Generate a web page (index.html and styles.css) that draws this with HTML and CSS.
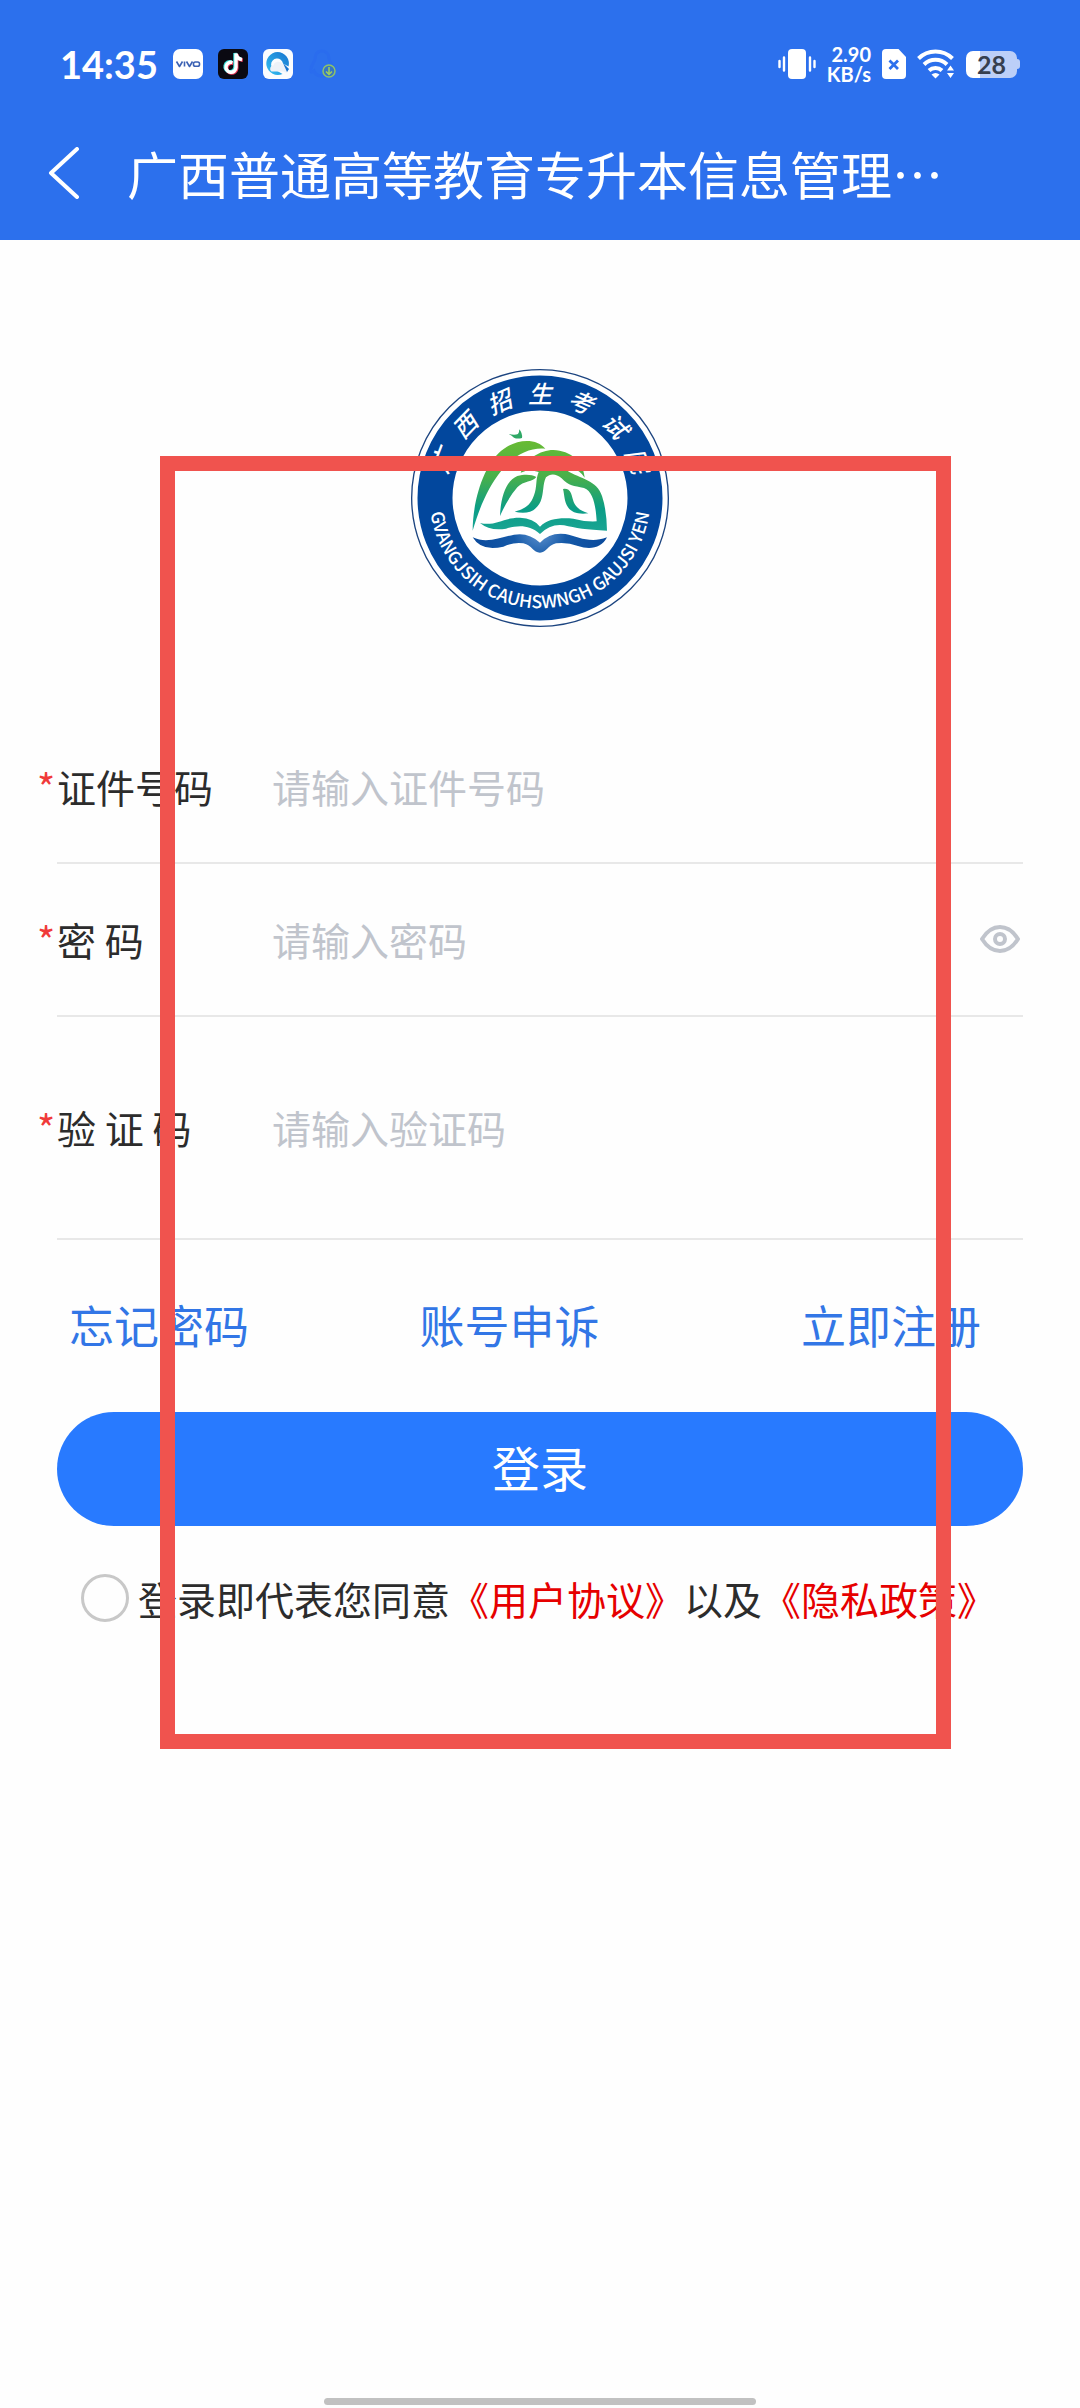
FILE: index.html
```
<!DOCTYPE html>
<html lang="zh-CN">
<head>
	<meta charset="UTF-8">
	<meta name="viewport" content="width=device-width">
	<title>广西普通高等教育专升本信息管理系统</title>
	<link rel="stylesheet" href="styles.css">
</head>
<body>
	<div class="app">
		<header class="top">
			<div class="status">
				<div class="status-left">
					<span class="clock">14:35</span>
					<svg width="30" height="30" viewBox="0 0 30 30">
						<rect width="30" height="30" rx="7" fill="#fff"/>
						<g fill="none" stroke="#3c62b4" stroke-width="1.6" stroke-linejoin="round">
							<path d="M3.500 12.500l3 5 3-5M11.500 12.500v5M13.500 12.500l3 5 3-5"/>
							<rect x="20.500" y="13" width="6" height="4.300" rx="1.800"/>
						</g>
					</svg>
					<svg width="30" height="30" viewBox="0 0 30 30">
						<rect width="30" height="30" rx="6" fill="#0a0912"/>
						<g fill="none" stroke-width="3.400">
							<path d="M14.500 13.500a5 5 0 1 0 3.500 5V4.500c.5 3.500 2.500 5.500 6 6" stroke="#ee3a5b" transform="translate(.8 .8)"/>
							<path d="M14.500 13.500a5 5 0 1 0 3.500 5V4.500c.5 3.500 2.500 5.500 6 6" stroke="#3ee0dc" transform="translate(-1 -.6)"/>
							<path d="M14.500 13.500a5 5 0 1 0 3.500 5V4.500c.5 3.500 2.500 5.500 6 6" stroke="#fff"/>
						</g>
					</svg>
					<svg width="30" height="30" viewBox="0 0 30 30">
						<defs>
							<linearGradient id="ring" x1="0" y1="1" x2="1" y2="0">
								<stop offset="0" stop-color="#35c1f2"/>
								<stop offset="1" stop-color="#1673cf"/>
							</linearGradient>
						</defs>
						<rect width="30" height="30" rx="6" fill="#fbfcfe"/>
						<path d="M14.500 3a11.500 11.500 0 1 0 5 22l-6-3.500a6 6 0 1 1 6.500-7l5.500 3A11.500 11.500 0 0 0 14.500 3z" fill="url(#ring)"/>
						<path d="M8.500 22.500a3.500 3.500 0 0 1 2-6.300 5 5 0 0 1 9-1.200l6 5.500-1.500 3.500-4-1.500z" fill="#eef2f8"/>
						<path d="M20 14l6 6-2 3z" fill="#1673cf"/>
					</svg>
					<svg class="qq" width="28" height="30" viewBox="0 0 28 30">
						<path d="M14 2c-5 0-7 4-7 8 0 3-5 7-4 12 0 2 2 1 3 0 1 3 3 5 8 5s7-2 8-5c1 1 3 2 3 0 1-5-4-9-4-12 0-4-2-8-7-8z" fill="none" stroke="#2a6cee" stroke-width="3"/>
						<circle cx="21" cy="22" r="6" fill="#3574c6" stroke="#8dc26a" stroke-width="1.500"/>
						<path d="M21 18v7M18 22.500l3 3 3-3" fill="none" stroke="#9fd05c" stroke-width="1.500"/>
					</svg>
				</div>
				<div class="status-right">
					<svg width="38" height="32" viewBox="0 0 38 32">
						<rect x="10" y="1" width="18" height="30" rx="4" fill="#fff"/>
						<path d="M1.500 13v6M6 9.500v13M32 9.500v13M36.500 13v6" stroke="#fff" stroke-width="2.400" stroke-linecap="round"/>
					</svg>
					<span class="speed"><span>2.90</span><span>KB/s</span></span>
					<svg width="24" height="30" viewBox="0 0 24 30">
						<path d="M4 0h12.500L24 8v18a4 4 0 0 1-4 4H4a4 4 0 0 1-4-4V4a4 4 0 0 1 4-4z" fill="#fff"/>
						<path d="M7.500 11.500l8.500 8.500M16 11.500l-8.500 8.500" stroke="#2c70ed" stroke-width="2.800"/>
					</svg>
					<svg class="wifi" width="38" height="30" viewBox="0 0 38 30">
						<g fill="none" stroke="#fff" stroke-width="4">
							<path d="M1.500 9.500a24 24 0 0 1 34 0"/>
							<path d="M7 15.500a16.500 16.500 0 0 1 23 0"/>
							<path d="M12 21.500a9.500 9.500 0 0 1 13 0"/>
						</g>
						<path d="M14.500 25.500q4-3 8 0l-4 4z" fill="#fff"/>
						<path d="M30 21.500l3.500-5 3.500 5zM30 24l3.500 5 3.500-5z" fill="#fff"/>
					</svg>
					<span class="battery"><span class="level">28</span></span>
				</div>
			</div>
			<div class="nav">
				<button class="back" type="button" aria-label="返回">
					<svg width="32" height="52" viewBox="0 0 32 52"><path d="M29 2L3 26l26 24" fill="none" stroke="#fff" stroke-width="4" stroke-linecap="round" stroke-linejoin="round"/></svg>
				</button>
				<h1 class="title">广西普通高等教育专升本信息管理…</h1>
			</div>
		</header>

		<main class="main">
			<svg class="logo" width="260" height="260" viewBox="30 24 780 780">
				<defs>
					<linearGradient id="leaf" gradientUnits="userSpaceOnUse" x1="0" y1="60" x2="0" y2="335">
						<stop offset="0" stop-color="#69bb33"/>
						<stop offset=".4" stop-color="#49b04a"/>
						<stop offset=".75" stop-color="#0a9d86"/>
						<stop offset="1" stop-color="#1aa594"/>
					</linearGradient>
					<radialGradient id="wave" gradientUnits="userSpaceOnUse" cx="240" cy="335" r="200">
						<stop offset="0" stop-color="#5f93cf"/>
						<stop offset=".4" stop-color="#1559a8"/>
						<stop offset="1" stop-color="#0a4a9c"/>
					</radialGradient>
					<path id="arc" d="M89 414a331 331 0 0 0 662 0"/>
				</defs>
				<circle cx="420" cy="414" r="385" fill="#fff" stroke="#1d4580" stroke-width="4"/>
				<circle cx="420" cy="414" r="315" fill="#fff" stroke="#02479d" stroke-width="105"/>
				<g class="logo-cn">
					<text x="420" y="128" transform="rotate(-69 420 414)">广</text>
					<text x="420" y="128" transform="rotate(-46 420 414)">西</text>
					<text x="420" y="128" transform="rotate(-23 420 414)">招</text>
					<text x="420" y="128">生</text>
					<text x="420" y="128" transform="rotate(23 420 414)">考</text>
					<text x="420" y="128" transform="rotate(46 420 414)">试</text>
					<text x="420" y="128" transform="rotate(69 420 414)">院</text>
				</g>
				<text class="logo-en"><textPath href="#arc" startOffset="50%">GVANGJSIH CAUHSWNGH GAUJSI YEN</textPath></text>
				<g transform="translate(180 180)" fill="url(#leaf)">
					<path d="M146 42q18 5 28 0q4-4 4-14q10 12 8 26q-14 4-24-1q-8-7-16-11z" fill="#2fa866"/>
					<path d="M38 332C38 240 74 124 132 86C176 54 232 56 256 86C210 82 166 102 124 152C86 200 62 252 38 332z"/>
					<path d="M182 158C196 118 240 90 280 90C332 92 370 124 374 173C358 150 346 146 322 152C360 176 412 180 426 228Q440 270 441 332C380 330 346 324 312 316Q272 310 240 342C206 312 172 316 138 326Q90 334 60 309C106 320 130 292 180 293Q220 294 240 320C262 296 302 292 340 296Q376 306 410 304C408 268 402 214 372 204C340 196 328 200 304 174C288 160 270 160 258 172C248 190 252 220 242 244C228 276 198 284 164 275C198 266 212 254 222 226C232 200 226 180 236 156Q208 146 182 158z"/>
					<path d="M120 288C122 232 138 182 172 168C196 162 216 164 229 171C220 186 190 182 172 202C150 228 134 256 120 288z"/>
					<path d="M309 207Q326 204 333 220C342 242 336 264 385 280C352 284 334 276 324 262C312 244 314 226 309 207z"/>
				</g>
				<path transform="translate(180 180)" d="M38 352C80 372 122 352 162 344Q206 336 240 368Q270 336 316 342C356 350 390 372 441 352C426 384 390 390 354 378Q322 366 288 370C264 376 258 398 240 398C220 398 216 376 190 370Q160 366 130 380Q64 396 38 352z" fill="url(#wave)"/>
			</svg>

			<form class="form">
				<div class="row">
					<label class="label" for="idno">证件号码</label>
					<input class="text" id="idno" type="text" placeholder="请输入证件号码">
				</div>
				<div class="row">
					<label class="label" for="pwd">密 码</label>
					<input class="text" id="pwd" type="password" placeholder="请输入密码">
					<button class="eye" type="button" aria-label="显示密码">
						<svg width="42" height="30" viewBox="0 0 42 30">
							<path d="M3 15C8 7 14 3 21 3s13 4 18 12c-5 8-11 12-18 12S8 23 3 15z" fill="none" stroke="#c0c4cc" stroke-width="4" stroke-linejoin="round"/>
							<circle cx="21" cy="15" r="5" fill="none" stroke="#c0c4cc" stroke-width="4"/>
						</svg>
					</button>
				</div>
				<div class="row row-code">
					<label class="label" for="code">验 证 码</label>
					<input class="text" id="code" type="text" placeholder="请输入验证码">
				</div>

				<div class="links">
					<a href="#">忘记密码</a>
					<a href="#">账号申诉</a>
					<a href="#">立即注册</a>
				</div>

				<button class="login" type="button">登录</button>

				<div class="agree">
					<input id="agree" type="radio">
					<label for="agree">登录即代表您同意<a href="#">《用户协议》</a>以及<a href="#">《隐私政策》</a></label>
				</div>
			</form>
		</main>

		<div class="home"></div>
		<div class="mark"></div>
	</div>
</body>
</html>
```
FILE: styles.css
```
* {
	box-sizing: border-box;
}
body {
	margin: 0;
	background-color: #fefefe;
	color: #2c2c2c;
	font-family: "Noto Sans CJK SC", sans-serif;
	font-size: 39px;
}
button {
	border: 0;
	padding: 0;
	background: none;
	font-family: inherit;
}
a {
	text-decoration: none;
}
svg {
	display: block;
}
.app {
	position: relative;
	display: flex;
	flex-direction: column;
	min-height: 100vh;
}

/* 顶部 */
.top {
	background-color: #2c70ed;
	color: #fff;
	padding-bottom: 10px;
}
.status {
	display: flex;
	justify-content: space-between;
	height: 106px;
	padding: 22px 60px 0 60px;
	font-family: Lato, sans-serif;
	font-weight: bold;
}
.status-left, .status-right {
	display: flex;
	align-items: center;
}
.status-left {
	gap: 15px;
}
.status-right {
	gap: 11px;
}
.clock {
	font-size: 38px;
}
.speed {
	display: flex;
	flex-direction: column;
	align-items: flex-end;
	font-size: 20px;
	line-height: 20px;
}
.battery {
	display: flex;
	align-items: center;
}
.battery::after {
	content: "";
	width: 3px;
	height: 10px;
	border-radius: 0 3px 3px 0;
	background-color: #bccff8;
}
.level {
	width: 51px;
	border-radius: 7px;
	background: linear-gradient(90deg, #fff 28%, #bccff8 28%);
	color: #363f50;
	font-size: 25px;
	line-height: 27px;
	text-align: center;
}
.nav {
	display: flex;
	align-items: center;
	gap: 47px;
	height: 124px;
	padding: 10px 48px 0;
}
.title {
	margin: 0;
	font-size: 51px;
	font-weight: normal;
	line-height: 76px;
}

/* 登录 */
.main {
	padding: 128px 57px 0;
}
.logo {
	margin: 0 auto;
}
.logo-cn {
	fill: #fff;
	font-size: 72px;
	font-weight: 500;
	font-style: italic;
	text-anchor: middle;
}
.logo-en {
	fill: #fff;
	font-size: 53px;
	font-weight: 500;
	text-anchor: middle;
}
.form {
	margin-top: 83px;
}
.row {
	display: flex;
	align-items: center;
	height: 153px;
	padding-bottom: 2px;
	border-bottom: 2px solid #e8e8e8;
}
.row-code {
	height: 223px;
}
.label {
	width: 215px;
}
.label::before {
	content: "*";
	display: inline-block;
	width: 20px;
	margin-left: -20px;
	color: #f03a3a;
}
.text {
	flex: 1;
	min-width: 0;
	border: 0;
	padding: 0;
	outline: none;
	background: none;
	color: inherit;
	font: inherit;
}
.text::placeholder {
	color: #c0c4cc;
}
.eye {
	padding-right: 2px;
}
.links {
	display: grid;
	grid-template-columns: 351fr 382fr auto;
	padding: 52px 42px 0 12px;
	font-size: 45px;
	line-height: 66px;
}
.links a {
	color: #3276e6;
}
.login {
	display: block;
	width: 100%;
	height: 114px;
	margin-top: 54px;
	padding-bottom: 6px;
	border-radius: 57px;
	background-color: #287aff;
	color: #fff;
	font-size: 48px;
}
.agree {
	display: flex;
	align-items: center;
	gap: 9px;
	margin-top: 44px;
	padding-left: 24px;
}
.agree input {
	appearance: none;
	width: 48px;
	height: 48px;
	margin: 0;
	border: 3px solid #c8c8c8;
	border-radius: 50%;
}
.agree input:checked {
	background-color: #287aff;
}
.agree a {
	color: #e60000;
}

.home {
	width: 40%;
	height: 7px;
	margin: auto auto 3px;
	border-radius: 4px;
	background-color: #c1c1c1;
}
/* 红框标注 */
.mark {
	position: absolute;
	top: 456px;
	left: 160px;
	right: 129px;
	height: 1293px;
	border: 15px solid #f0534e;
	pointer-events: none;
}
```
